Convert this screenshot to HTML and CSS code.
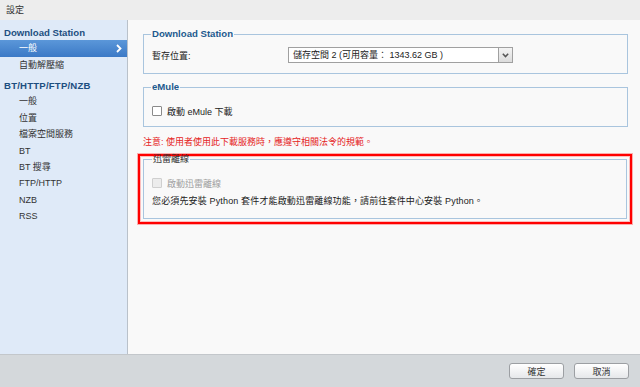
FILE: index.html
```html
<!DOCTYPE html>
<html lang="zh-Hant">
<head>
<meta charset="UTF-8">
<title>設定</title>
<link rel="stylesheet" href="styles.css">
</head>
<body>
<div class="window">
    <div class="titlebar">設定</div>
    <div class="main">
        <div class="sidebar">
            <div class="nav-head">Download Station</div>
            <div class="nav-item selected">一般
                <svg class="chev" width="6" height="9" viewBox="0 0 6 9"><path d="M1 1 L4.5 4.5 L1 8" fill="none" stroke="#fff" stroke-width="1.8"/></svg>
            </div>
            <div class="nav-item">自動解壓縮</div>
            <div class="nav-head second">BT/HTTP/FTP/NZB</div>
            <div class="nav-item">一般</div>
            <div class="nav-item">位置</div>
            <div class="nav-item">檔案空間服務</div>
            <div class="nav-item">BT</div>
            <div class="nav-item">BT 搜尋</div>
            <div class="nav-item">FTP/HTTP</div>
            <div class="nav-item">NZB</div>
            <div class="nav-item">RSS</div>
        </div>
        <div class="content">
            <fieldset class="group first">
                <legend>Download Station</legend>
                <div class="row">
                    <span class="label">暫存位置:</span>
                    <div class="select">
                        <span class="select-text">儲存空間 2 (可用容量： 1343.62 GB )</span>
                        <span class="select-btn">
                            <svg width="7" height="5" viewBox="0 0 7 5"><path d="M0.8 0.8 L3.5 3.6 L6.2 0.8" fill="none" stroke="#555" stroke-width="1.5"/></svg>
                        </span>
                    </div>
                </div>
            </fieldset>
            <fieldset class="group second">
                <legend>eMule</legend>
                <div class="row">
                    <span class="check"></span>
                    <span class="check-label">啟動 eMule 下載</span>
                </div>
            </fieldset>
            <p class="notice">注意: 使用者使用此下載服務時，應遵守相關法令的規範。</p>
            <div class="highlight">
                <fieldset class="group third">
                    <legend>迅雷離線</legend>
                    <div class="row">
                        <span class="check disabled"></span>
                        <span class="check-label disabled">啟動迅雷離線</span>
                    </div>
                    <p class="hint">您必須先安裝 Python 套件才能啟動迅雷離線功能，請前往套件中心安裝 Python。</p>
                </fieldset>
            </div>
        </div>
    </div>
    <div class="footer">
        <button class="btn">確定</button>
        <button class="btn">取消</button>
    </div>
</div>
</body>
</html>
```
FILE: styles.css
```css
body {
    margin: 0;
    font-family: "Liberation Sans", "Noto Sans CJK TC", sans-serif;
    font-size: 9px;
    color: #222;
}
.window {
    width: 640px;
    height: 387px;
    display: flex;
    flex-direction: column;
    overflow: hidden;
}
.titlebar {
    height: 20px;
    line-height: 20px;
    padding-left: 6px;
    background: #ededed;
    color: #333;
}
.main {
    flex: 1;
    display: flex;
    min-height: 0;
}
.sidebar {
    width: 128px;
    background: #dfeaf8;
    border-right: 1px solid #b9c1ca;
    padding-top: 6px;
    box-sizing: border-box;
}
.nav-head {
    font-weight: bold;
    font-size: 9.6px;
    color: #1d4f80;
    line-height: 14px;
    padding-left: 4px;
}
.nav-head.second {
    margin-top: 6px;
    letter-spacing: 0.2px;
}
.nav-item {
    height: 16.4px;
    line-height: 16.4px;
    padding-left: 19px;
    color: #333;
    position: relative;
}
.nav-item.selected {
    height: 17px;
    line-height: 17px;
    background: linear-gradient(#5b97d9, #3b79c6);
    color: #fff;
}
.chev {
    position: absolute;
    right: 5px;
    top: 4px;
}
.content {
    flex: 1;
    background: #f9f9f9;
    padding: 8px 12px 0 15px;
}
.group {
    margin: 0;
    padding: 0 8px;
    border: 1px solid #a9c5de;
}
.group legend {
    padding: 0 1px;
    margin-left: -1px;
    line-height: 12px;
    font-weight: bold;
    font-size: 9.6px;
    color: #1d5a8e;
}
.group.first {
    padding-top: 7px;
    padding-bottom: 10px;
}
.group.second {
    margin-top: 7px;
    padding-top: 10px;
    padding-bottom: 7px;
}
.row {
    display: flex;
    align-items: center;
    height: 16px;
}
.label {
    width: 136px;
}
.select {
    width: 225px;
    height: 16px;
    box-sizing: border-box;
    border: 1px solid #a0a0a0;
    background: #fff;
    display: flex;
}
.select-text {
    flex: 1;
    padding-left: 4px;
    line-height: 14px;
}
.select-btn {
    width: 13px;
    border-left: 1px solid #a0a0a0;
    background: linear-gradient(#f4f4f4, #dcdcdc);
    display: flex;
    align-items: center;
    justify-content: center;
}
.check {
    width: 10px;
    height: 10px;
    box-sizing: border-box;
    border: 1px solid #8a8a8a;
    border-radius: 1px;
    background: #fff;
    margin-right: 5px;
}
.check.disabled {
    border-color: #cfcfcf;
    background: #ececec;
}
.check-label.disabled {
    color: #a0a0a0;
}
.notice {
    margin: 9px 0 0 0;
    line-height: 12px;
    color: #e5231d;
}
.highlight {
    margin: 6px -4px 0 -5px;
    border: 2px solid #ff0000;
    box-shadow: 0 0 0 1px rgba(255, 80, 80, 0.45), inset 0 0 0 1px rgba(255, 80, 80, 0.35);
    padding: 0 3px 3px 3px;
}
.group.third {
    padding-top: 13px;
    padding-bottom: 11px;
}
.group.third legend {
    font-weight: normal;
    font-size: 9px;
    color: #333;
    line-height: 6px;
    margin-left: 0;
}
.hint {
    margin: 4px 0 0 0;
    line-height: 12px;
    letter-spacing: 0.15px;
}
.footer {
    height: 33px;
    box-sizing: border-box;
    background: #d4d8db;
    border-top: 1px solid #c3c7cb;
    display: flex;
    justify-content: flex-end;
    align-items: flex-start;
    padding: 8px 11px 0 0;
    gap: 10px;
}
.btn {
    width: 55px;
    height: 16px;
    padding: 0;
    font-family: inherit;
    font-size: 9px;
    color: #333;
    border: 1px solid #9c9fa3;
    border-radius: 3px;
    background: linear-gradient(#ffffff, #e6e8ea);
}
```
